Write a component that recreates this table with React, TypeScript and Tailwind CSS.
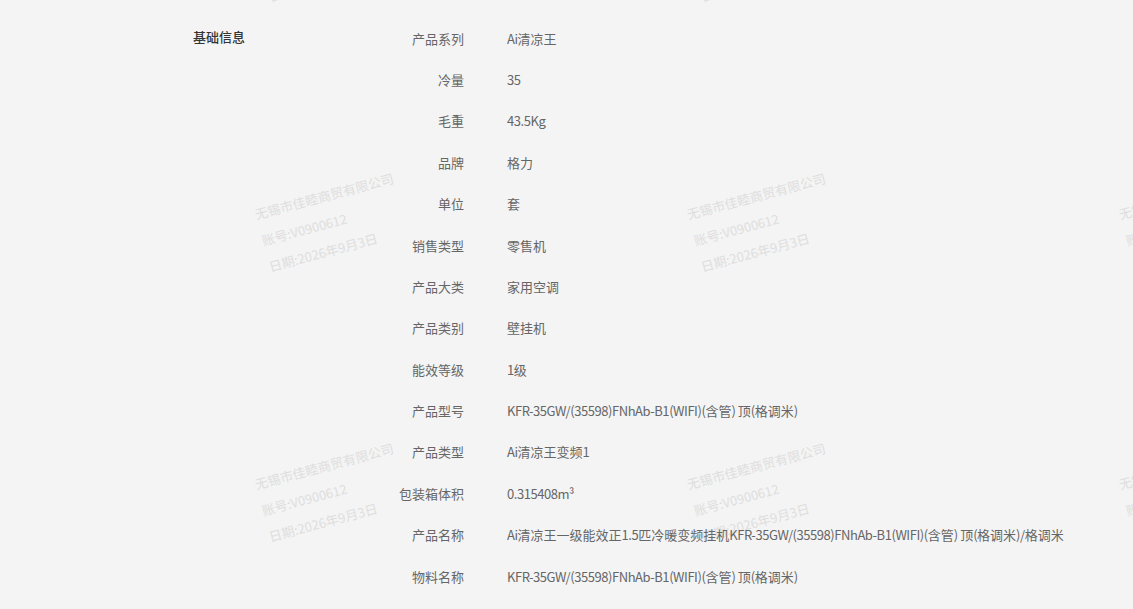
import React from "react";

const rows: [string, string][] = [
  ["产品系列", "Ai清凉王"],
  ["冷量", "35"],
  ["毛重", "43.5Kg"],
  ["品牌", "格力"],
  ["单位", "套"],
  ["销售类型", "零售机"],
  ["产品大类", "家用空调"],
  ["产品类别", "壁挂机"],
  ["能效等级", "1级"],
  ["产品型号", "KFR-35GW/(35598)FNhAb-B1(WIFI)(含管) 顶(格调米)"],
  ["产品类型", "Ai清凉王变频1"],
  ["包装箱体积", "0.315408m³"],
  ["产品名称", "Ai清凉王一级能效正1.5匹冷暖变频挂机KFR-35GW/(35598)FNhAb-B1(WIFI)(含管) 顶(格调米)/格调米"],
  ["物料名称", "KFR-35GW/(35598)FNhAb-B1(WIFI)(含管) 顶(格调米)"],
];

const font = { fontFamily: '"Noto Sans CJK SC", "Noto Sans", sans-serif' };

function Value({ text }: { text: string }) {
  const parts = text.match(/[\x00-\x7F³]+|[^\x00-\x7F³]+/g) || [];
  return (
    <>
      {parts.map((p, i) =>
        /^[\x00-\x7F³]+$/.test(p) ? (
          <span key={i} className="tracking-[-0.45px]">
            {p}
          </span>
        ) : (
          <span key={i}>{p}</span>
        )
      )}
    </>
  );
}

function Watermarks() {
  const tiles: { x: number; y: number }[] = [];
  for (let r = -1; r < 2; r++) {
    for (let c = 0; c < 3; c++) {
      tiles.push({ x: 255 + c * 432, y: 214 + r * 270 });
    }
  }
  return (
    <div className="pointer-events-none absolute inset-0 overflow-hidden">
      {tiles.map((t, i) => (
        <div
          key={i}
          className="absolute whitespace-nowrap text-[13px] leading-[27px] text-[#dedede] origin-[0_13.5px] -rotate-[15deg]"
          style={{ left: t.x, top: t.y - 13.5, ...font }}
        >
          <div>无锡市佳睦商贸有限公司</div>
          <div>账号:V0900612</div>
          <div>日期:2026年9月3日</div>
        </div>
      ))}
    </div>
  );
}

export default function App() {
  return (
    <div className="relative h-[609px] w-full overflow-hidden bg-[#f4f4f4]" style={font}>
      <Watermarks />
      <div className="relative flex pl-[193px] pt-[18px]">
        <div className="w-[200px] pt-[9px] text-[13px] font-medium leading-[20px] text-[#333]">
          基础信息
        </div>
        <div className="flex flex-col">
          {rows.map(([k, v]) => (
            <div key={k} className="flex h-[41.38px] items-center text-[13px] leading-[20px] text-[#666]">
              <div className="w-[71px] text-right">{k}</div>
              <div className="ml-[43px] whitespace-nowrap">
                <Value text={v} />
              </div>
            </div>
          ))}
        </div>
      </div>
    </div>
  );
}
